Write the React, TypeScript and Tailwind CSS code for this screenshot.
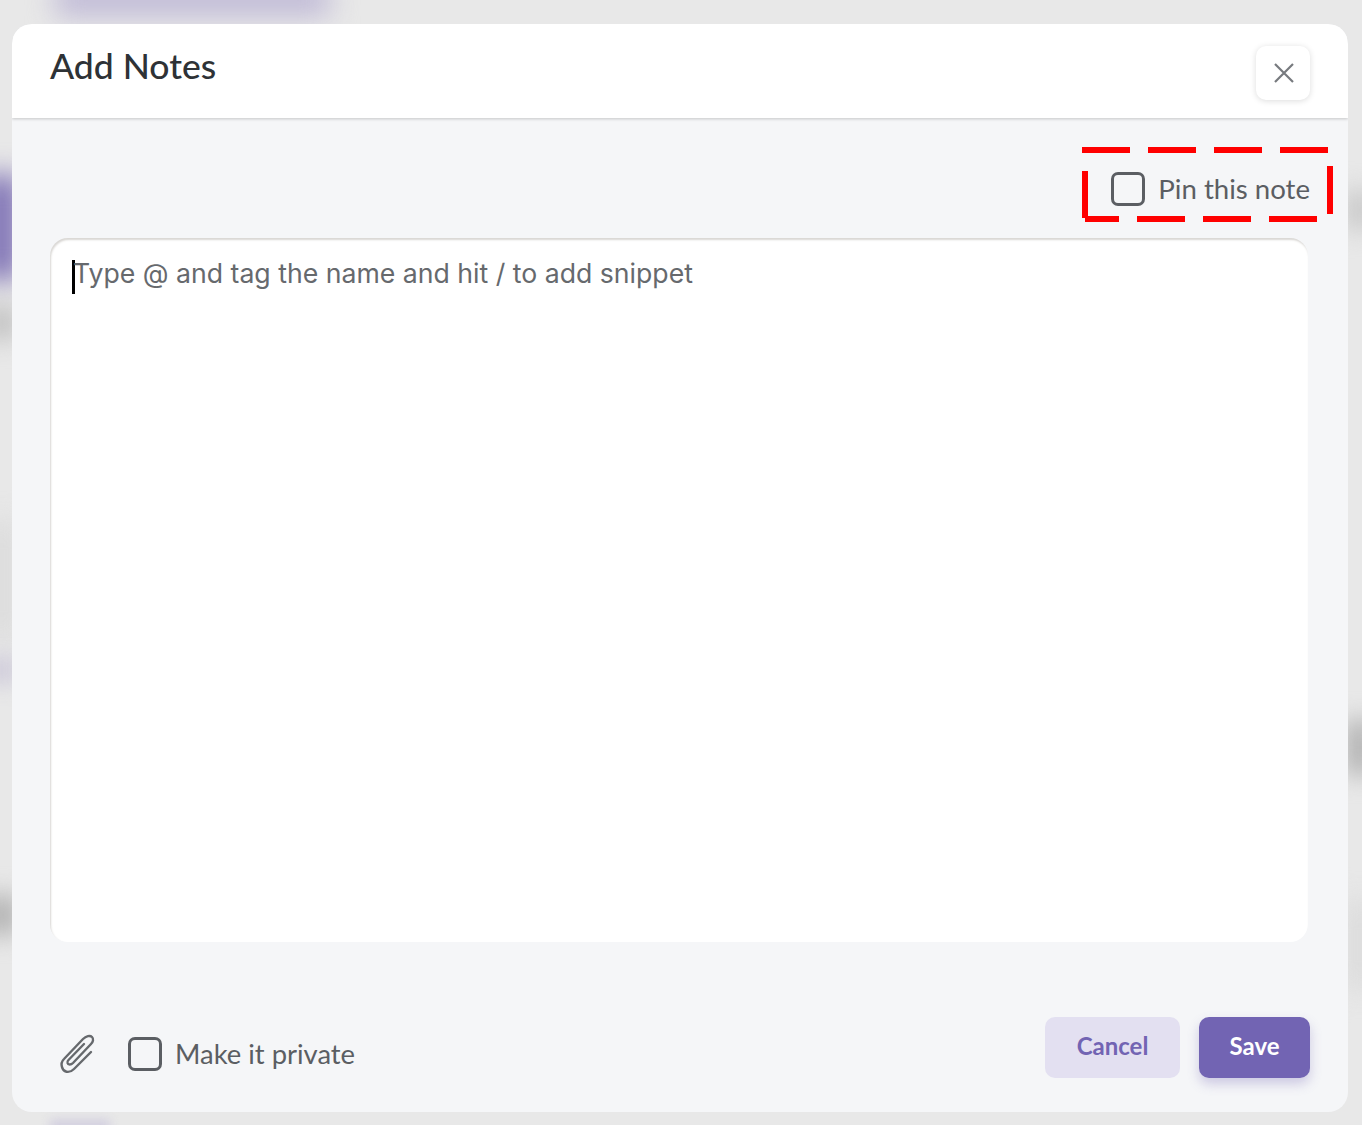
import React from 'react';

const dashes = [
  'M1082 150H1130', 'M1148 150H1196', 'M1214 150H1262', 'M1280 150H1328',
  'M1085 219H1119', 'M1137 219H1185', 'M1203 219H1251', 'M1269 219H1317',
  'M1085 171V218', 'M1330 166V214',
];

const Checkbox: React.FC = () => (
  <span className="block w-[34px] h-[34px] shrink-0 rounded-[7px] border-[3.5px] border-[#5b5e63]" />
);

const App: React.FC = () => {
  return (
    <div className="relative w-[1362px] h-[1125px] overflow-hidden bg-[#e8e8e8] pt-6 px-3 font-['Lato',sans-serif]">
      {/* blurred page behind the modal */}
      <div className="absolute left-[55px] top-[-18px] w-[275px] h-[34px] bg-[#bfb9d6] blur-[14px]" />
      <div className="absolute left-[-20px] top-[175px] w-[40px] h-[105px] bg-[#7d70b4] blur-[14px]" />
      <div className="absolute left-[-20px] top-[305px] w-[40px] h-[35px] bg-[#c4c4c4] blur-[12px]" />
      <div className="absolute left-[-20px] top-[520px] w-[40px] h-[120px] bg-[#dcdcdc] blur-[14px]" />
      <div className="absolute left-[-20px] top-[655px] w-[40px] h-[30px] bg-[#d2cfdc] blur-[10px]" />
      <div className="absolute left-[-20px] top-[895px] w-[40px] h-[40px] bg-[#b4b4b4] blur-[12px]" />
      <div className="absolute right-[-20px] top-[190px] w-[40px] h-[40px] bg-[#cccccc] blur-[12px]" />
      <div className="absolute right-[-20px] top-[720px] w-[40px] h-[55px] bg-[#b8b8b8] blur-[12px]" />
      <div className="absolute right-[-20px] top-[900px] w-[40px] h-[90px] bg-[#dcdcdc] blur-[14px]" />
      <div className="absolute left-[50px] bottom-[-10px] w-[60px] h-[16px] bg-[#d4d1e0] blur-[5px]" />

      <div className="relative w-[1336px] h-[1088px] rounded-[20px] bg-[#f5f6f8] overflow-hidden flex flex-col">
        <div className="h-[94px] shrink-0 bg-white shadow-[0_1px_3px_rgba(0,0,0,0.2)] pl-[38px] pr-[38px] flex justify-between">
          <h2 className="mt-[20px] text-[35.500px] leading-[44px] font-medium text-[#2e3236]">Add Notes</h2>
          <button className="mt-[22px] w-[54px] h-[54px] rounded-[10px] bg-white shadow-[0_1px_6px_rgba(0,0,0,0.14)] flex items-center justify-center">
            <svg className="-mt-[1px] ml-[1px]" width="20" height="20" viewBox="0 0 20 20" fill="none" stroke="#777a7e" strokeWidth="2.200">
              <path d="M1 1L19 19M19 1L1 19" />
            </svg>
          </button>
        </div>

        <div className="flex-1 flex flex-col pl-[38px] pr-[38px]">
          <div className="mt-[54px] flex items-center justify-end gap-[13px]">
            <Checkbox />
            <span className="text-[27.600px] leading-[34px] text-[#5b5e63]">Pin this note</span>
          </div>

          <div className="mt-[32px] w-[1258px] h-[704px] rounded-[18px] bg-white shadow-[inset_1px_2px_2px_rgba(120,110,100,0.28)] pl-[22px] pt-[18px] flex">
            <span className="w-[2.500px] h-[34px] mt-[4px] bg-black shrink-0 -mr-[1.500px]" />
            <p className="font-['Inter',sans-serif] text-[26.650px] leading-[34px] text-[#66696d]">Type @ and tag the name and hit / to add snippet</p>
          </div>

          <div className="mt-[75px] flex justify-between">
            <div className="flex items-center mt-[17px] h-[40px]">
              <svg className="ml-[9px]" width="36" height="40" viewBox="0 0 36 40" fill="none" stroke="#66696d" strokeWidth="2.400" strokeLinecap="round">
                <path d="M32 18L15 35C10 40 4 38 3 33C2 30 3 27 5 25L24 5C27 2 31 1 33 3C35 5 34 8 32 10L14 29C12 31 9 31 8.500 29C8 28 8.500 27 9.500 26L25 10" />
              </svg>
              <span className="ml-[33px]"><Checkbox /></span>
              <span className="ml-[13px] text-[27.400px] leading-[34px] text-[#5b5e63]">Make it private</span>
            </div>
            <div className="flex gap-[19px]">
              <button className="w-[135px] h-[61px] pb-[4px] rounded-[10px] bg-[#e3e0f1] text-[24px] font-bold text-[#7264b3]">Cancel</button>
              <button className="w-[111px] h-[61px] pb-[4px] rounded-[10px] bg-[#7264b3] text-[24px] font-bold text-white shadow-[0_6px_12px_rgba(114,100,179,0.3)]">Save</button>
            </div>
          </div>
        </div>
      </div>

      {/* red dashed annotation */}
      <svg className="absolute left-0 top-0 pointer-events-none" width="1362" height="1125" fill="none" stroke="#ff0000" strokeWidth="6">
        {dashes.map(d => <path key={d} d={d} />)}
      </svg>
    </div>
  );
};

export default App;
